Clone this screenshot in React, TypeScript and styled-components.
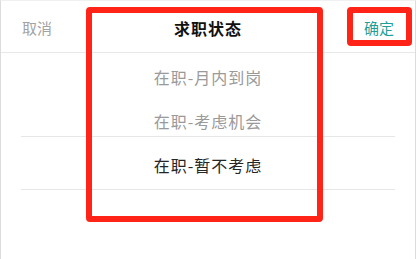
import React from "react";
import styled, { createGlobalStyle } from "styled-components";

const Global = createGlobalStyle`
  html, body { margin: 0; padding: 0; background: #ffffff; }
  body { font-family: "Noto Sans CJK SC", "Noto Sans", sans-serif; }
  * { box-sizing: border-box; }
`;

const Frame = styled.div`
  position: relative;
  width: 416px;
  height: 259px;
  background: #ffffff;
  border-left: 1px solid #dcdcdc;
  border-right: 1px solid #dcdcdc;
  border-top: 1px solid #f0f0f0;
  overflow: hidden;
`;

const Header = styled.div`
  display: grid;
  grid-template-columns: 1fr auto 1fr;
  align-items: center;
  height: 52px;
  padding: 2px 21px 0;
  border-bottom: 1px solid #e8e8e8;
`;

const Action = styled.span<{ $primary?: boolean; $end?: boolean }>`
  font-size: 15px;
  line-height: 20px;
  color: ${(p) => (p.$primary ? "#1f9f98" : "#a3a3a3")};
  justify-self: ${(p) => (p.$end ? "end" : "start")};
`;

const Title = styled.span`
  font-size: 16px;
  line-height: 20px;
  font-weight: 700;
  letter-spacing: 1px;
  color: #111111;
`;

const Picker = styled.div`
  position: relative;
  display: flex;
  flex-direction: column;
  padding-top: 2px;
  height: 205px;
`;

const Row = styled.div<{ $active?: boolean }>`
  height: 44px;
  display: flex;
  align-items: center;
  justify-content: center;
  font-size: 16px;
  letter-spacing: 1px;
  color: ${(p) => (p.$active ? "#262626" : "#9a9a9a")};
`;

const Indicator = styled.div`
  position: absolute;
  left: 20px;
  right: 20px;
  top: 83px;
  height: 54px;
  border-top: 1px solid #e6e6e6;
  border-bottom: 1px solid #e6e6e6;
  pointer-events: none;
`;

const Mark = styled.div<{ $l: number; $t: number; $w: number; $h: number }>`
  position: absolute;
  left: ${(p) => p.$l}px;
  top: ${(p) => p.$t}px;
  width: ${(p) => p.$w}px;
  height: ${(p) => p.$h}px;
  border: 6px solid #ff2318;
  border-radius: 4px;
  pointer-events: none;
`;

const items = ["在职-月内到岗", "在职-考虑机会", "在职-暂不考虑"];

export default function App() {
  return (
    <>
      <Global />
      <Frame>
        <Header>
          <Action>取消</Action>
          <Title>求职状态</Title>
          <Action $primary $end>
            确定
          </Action>
        </Header>
        <Picker>
          <Indicator />
          {items.map((t, i) => (
            <Row key={t} $active={i === 2}>
              {t}
            </Row>
          ))}
        </Picker>
        <Mark $l={85} $t={6} $w={237} $h={215} />
        <Mark $l={346} $t={6} $w={65} $h={39} />
      </Frame>
    </>
  );
}
